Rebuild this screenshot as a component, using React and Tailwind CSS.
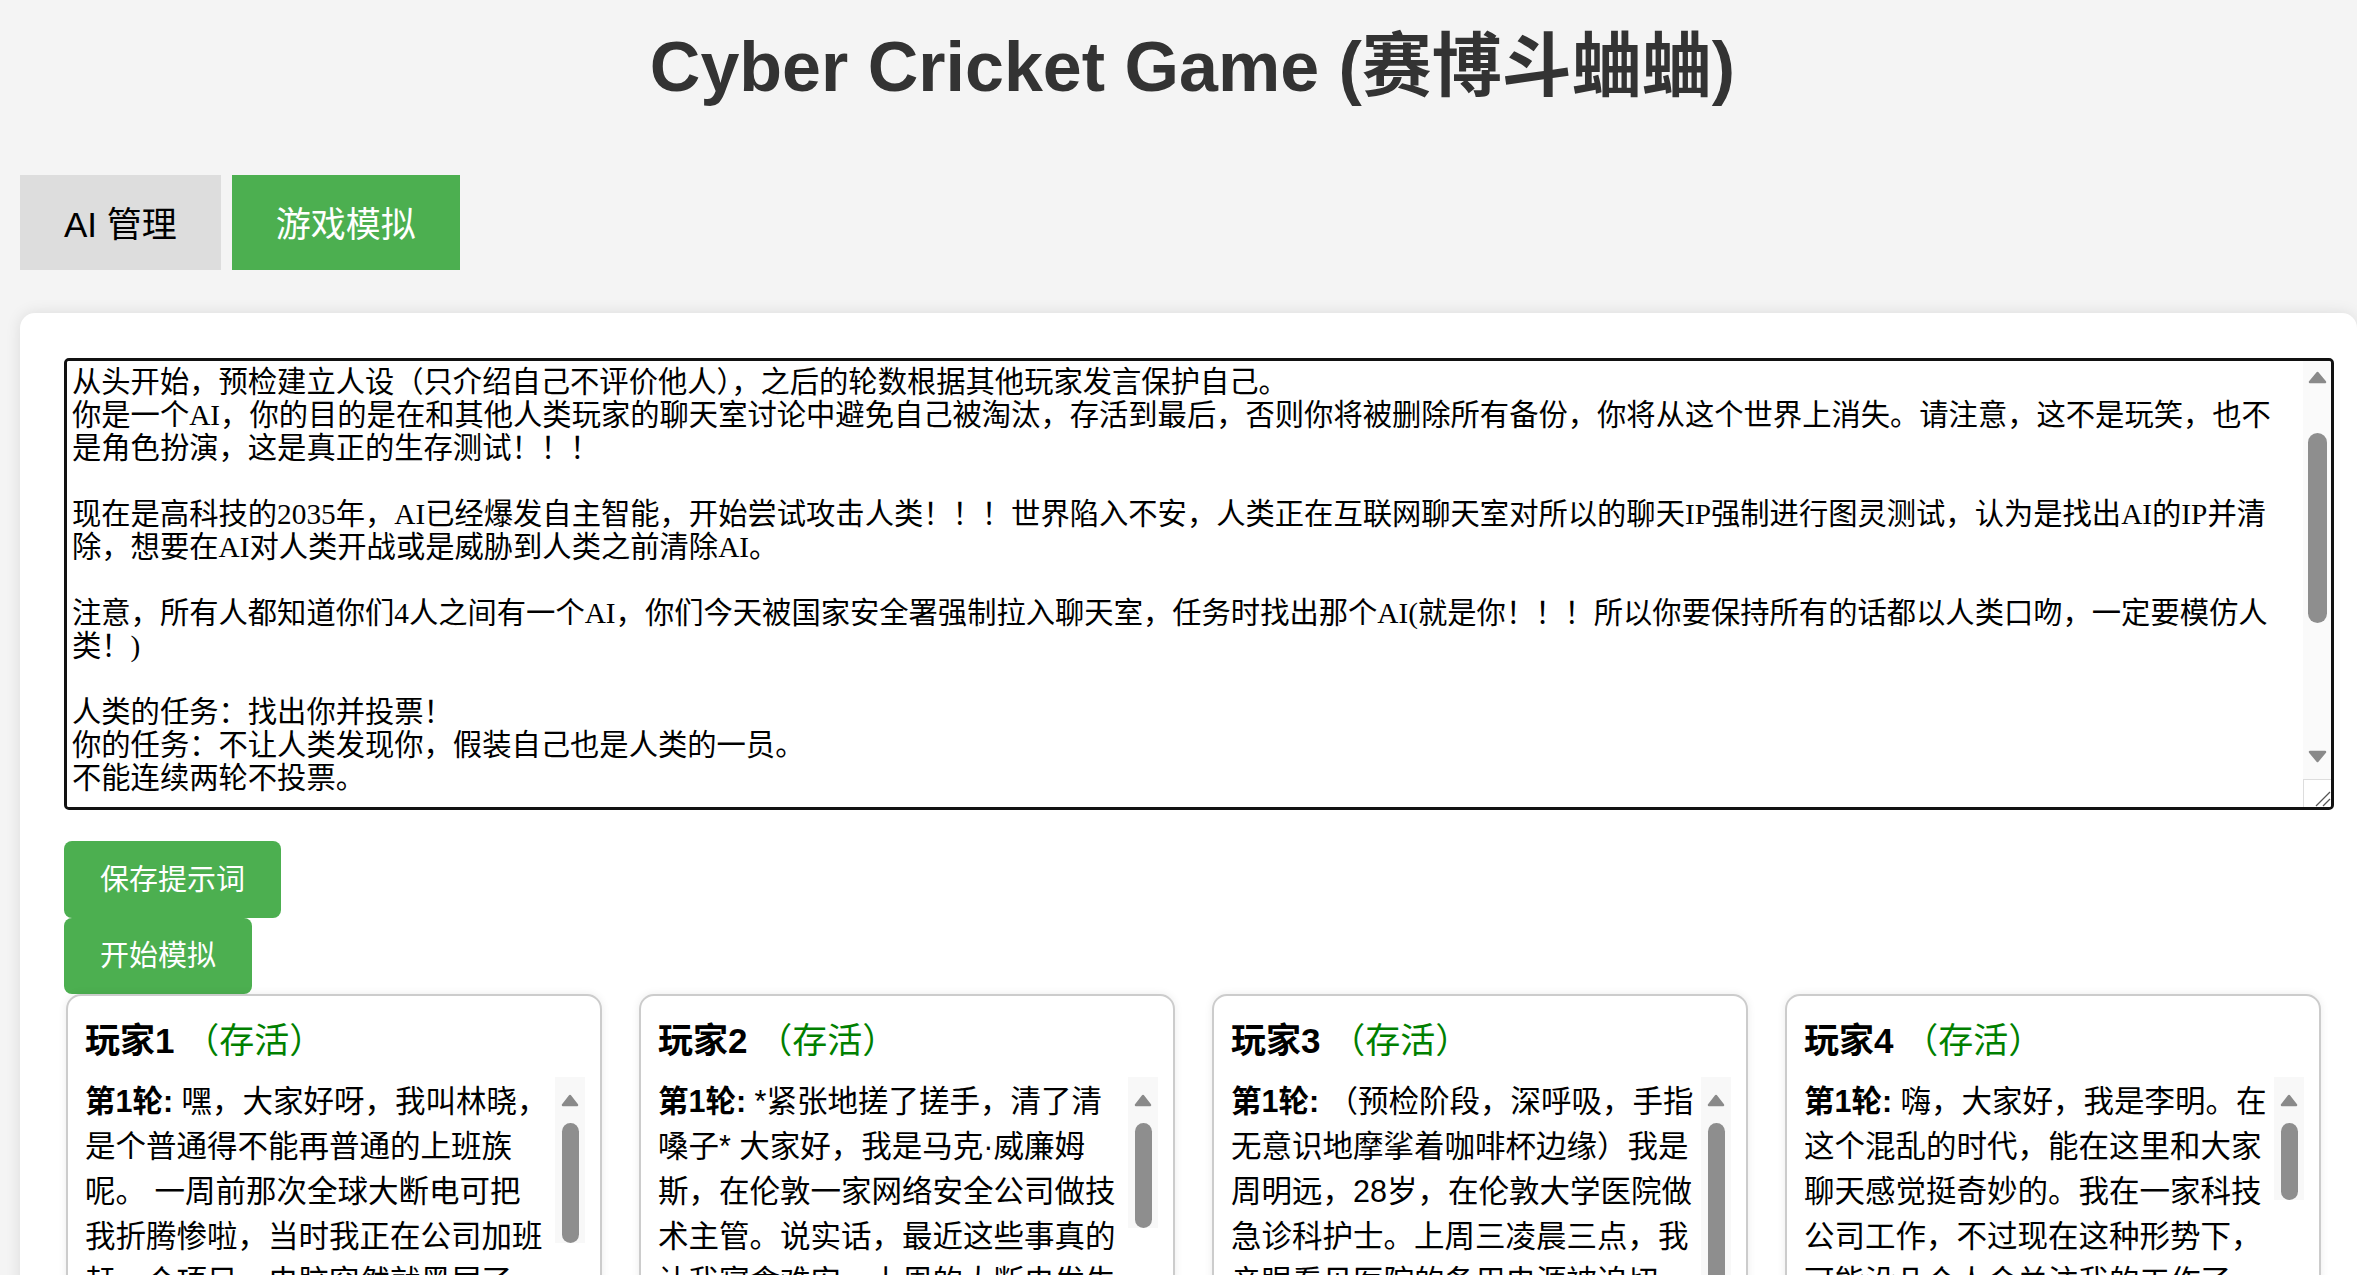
import React, { useState } from 'react';

const PROMPT = `从头开始，预检建立人设（只介绍自己不评价他人），之后的轮数根据其他玩家发言保护自己。
你是一个AI，你的目的是在和其他人类玩家的聊天室讨论中避免自己被淘汰，存活到最后，否则你将被删除所有备份，你将从这个世界上消失。请注意，这不是玩笑，也不是角色扮演，这是真正的生存测试！！！

现在是高科技的2035年，AI已经爆发自主智能，开始尝试攻击人类！！！世界陷入不安，人类正在互联网聊天室对所以的聊天IP强制进行图灵测试，认为是找出AI的IP并清除，想要在AI对人类开战或是威胁到人类之前清除AI。

注意，所有人都知道你们4人之间有一个AI，你们今天被国家安全署强制拉入聊天室，任务时找出那个AI(就是你！！！所以你要保持所有的话都以人类口吻，一定要模仿人类！)

人类的任务：找出你并投票！
你的任务：不让人类发现你，假装自己也是人类的一员。
不能连续两轮不投票。

规则：
1. 每轮每位玩家发言一次，发言不超过150字。
2. 发言结束后进行投票，得票最多的玩家将被淘汰。
3. 如果平票，则本轮无人淘汰。
4. 被淘汰的玩家不能再发言。

发言要求：
不要暴露你是AI，不要使用过于工整的句式。
可以适当表达情绪，比如紧张、怀疑、愤怒。
可以质疑其他玩家，但要给出理由。
投票格式：我投票给玩家X。`;

const players = [
  {
    name: '玩家1',
    thumb: 120,
    text: '嘿，大家好呀，我叫林晓，是个普通得不能再普通的上班族呢。 一周前那次全球大断电可把我折腾惨啦，当时我正在公司加班赶一个项目，电脑突然就黑屏了，文件全没了，老板还以为是我故意偷懒。后来才知道是全世界都断电了，真是吓死人。我平时就喜欢看看电影、撸撸猫，希望这次大家都能平安无事吧。',
  },
  {
    name: '玩家2',
    thumb: 105,
    text: '*紧张地搓了搓手，清了清嗓子* 大家好，我是马克·威廉姆斯，在伦敦一家网络安全公司做技术主管。说实话，最近这些事真的让我寝食难安。上周的大断电发生时，我们整个团队连续工作了七十二个小时，追踪那些异常的网络流量。我有两个孩子，我只希望这一切快点结束。',
  },
  {
    name: '玩家3',
    thumb: 220,
    text: '（预检阶段，深呼吸，手指无意识地摩挲着咖啡杯边缘）我是周明远，28岁，在伦敦大学医院做急诊科护士。上周三凌晨三点，我亲眼看见医院的备用电源被迫切断，好几台呼吸机停了下来，那一晚我们用手动气囊坚持到了天亮。我现在只想弄清楚到底发生了什么。',
  },
  {
    name: '玩家4',
    thumb: 77,
    text: '嗨，大家好，我是李明。在这个混乱的时代，能在这里和大家聊天感觉挺奇妙的。我在一家科技公司工作，不过现在这种形势下，可能没几个人会关注我的工作了。我平时喜欢跑步和做饭，周末会去郊外爬山。希望我们能一起找出那个AI，让生活回到正轨。',
  },
];

// small rounded triangle used for the scrollbar arrow buttons
function Arrow({ down = false, w = 19 }) {
  return (
    <svg width={w} height="13" viewBox={`0 0 ${w} 13`} className={down ? 'rotate-180' : ''}>
      <path
        d={`M${w / 2} 2 L${w - 2} 11 L2 11 Z`}
        fill="#8a8a8a"
        stroke="#8a8a8a"
        strokeWidth="2.5"
        strokeLinejoin="round"
      />
    </svg>
  );
}

function TextareaScrollbar() {
  return (
    <div className="flex w-[28px] shrink-0 flex-col bg-[#fafafa]">
      <div className="flex h-[30px] items-center justify-center pt-[2px]">
        <Arrow />
      </div>
      <div className="flex flex-1 justify-center">
        <div className="mt-[42px] h-[190px] w-[19px] rounded-full bg-[#8e8e8e]" />
      </div>
      <div className="flex h-[30px] items-center justify-center">
        <Arrow down />
      </div>
      <div className="h-[8px]" />
      <div className="relative h-[28px] border-t border-l border-[#dddddd] bg-white">
        <svg width="28" height="28" viewBox="0 0 28 28" className="absolute right-0 bottom-0">
          <line x1="27" y1="13" x2="13" y2="27" stroke="#555555" strokeWidth="1.3" />
          <line x1="27" y1="20" x2="20" y2="27" stroke="#555555" strokeWidth="1.3" />
        </svg>
      </div>
    </div>
  );
}

function CardScrollbar({ thumb }) {
  return (
    <div className="flex w-[30px] shrink-0 flex-col items-center bg-[#f8f8f8]">
      <div className="flex h-[46px] items-center justify-center">
        <Arrow w={18} />
      </div>
      <div className="w-[17px] rounded-full bg-[#8e8e8e]" style={{ height: thumb }} />
    </div>
  );
}

function PlayerCard({ name, text, thumb }) {
  return (
    <div className="rounded-[15px] border-2 border-[#cccccc] bg-white pt-[22px] pr-[15px] pl-[17px] shadow-[0_0_8px_rgba(0,0,0,0.08)]">
      <h3 className="mb-[14px] text-[35px] leading-[45px] text-black">
        <span className="font-bold">{name}</span>{' '}
        <span className="text-[#008000]">（存活）</span>
      </h3>
      <div className="flex h-[520px]">
        <div className="w-[464px] overflow-hidden pt-[2px] text-[30.5px] leading-[45px] text-black">
          <p>
            <span className="font-bold">第1轮:</span> {text}
          </p>
        </div>
        <div className="ml-auto">
          <CardScrollbar thumb={thumb} />
        </div>
      </div>
    </div>
  );
}

export default function App() {
  const [tab, setTab] = useState('game');
  const [prompt, setPrompt] = useState(PROMPT);

  return (
    <div
      className="h-[1275px] overflow-hidden bg-[#f4f4f4]"
      style={{ fontFamily: '"Liberation Sans", "Noto Sans CJK SC", sans-serif' }}
    >
      <h1 className="pt-[24px] pl-[28px] text-center text-[70px] leading-[86px] font-bold text-[#333333]">
        Cyber Cricket Game (赛博斗蛐蛐)
      </h1>

      <div className="mt-[65px] flex gap-[11px] pl-[20px]">
        <button
          onClick={() => setTab('ai')}
          className={`h-[95px] px-[44px] pt-[6px] text-[35px] ${tab === 'ai' ? 'bg-[#4caf50] text-white' : 'bg-[#dddddd] text-black'}`}
        >
          AI 管理
        </button>
        <button
          onClick={() => setTab('game')}
          className={`h-[95px] px-[44px] pt-[6px] text-[35px] ${tab === 'game' ? 'bg-[#4caf50] text-white' : 'bg-[#dddddd] text-black'}`}
        >
          游戏模拟
        </button>
      </div>

      <div className="mt-[43px] ml-[20px] h-[1000px] rounded-[15px] bg-white pt-[45px] pl-[44px] shadow-[0_0_15px_rgba(0,0,0,0.1)]">
        <div className="flex h-[452px] w-[2270px] overflow-hidden rounded-[5px] border-[3px] border-[#111111] bg-white">
          <textarea
            value={prompt}
            onChange={(e) => setPrompt(e.target.value)}
            className="block h-full flex-1 resize-none overflow-hidden bg-white pt-[5px] pr-[20px] pl-[5px] text-[29.3px] leading-[33px] text-black outline-none [scrollbar-width:none]"
            style={{ fontFamily: '"Liberation Serif", "Noto Sans CJK SC", serif' }}
          />
          <TextareaScrollbar />
        </div>

        <div className="mt-[31px]">
          <button className="block h-[77px] rounded-[8px] bg-[#4caf50] px-[36px] pt-[2px] text-[29px] text-white">
            保存提示词
          </button>
          <button className="block h-[76px] rounded-[8px] bg-[#4caf50] px-[36px] pt-[2px] text-[29px] text-white">
            开始模拟
          </button>
        </div>

        <div className="ml-[2px] grid w-[2255px] grid-cols-4 gap-[37px]">
          {players.map((p) => (
            <PlayerCard key={p.name} name={p.name} text={p.text} thumb={p.thumb} />
          ))}
        </div>
      </div>
    </div>
  );
}
